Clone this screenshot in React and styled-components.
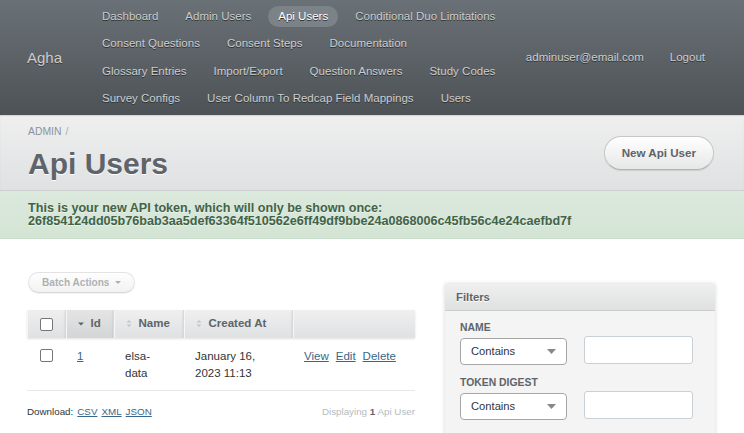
import React from "react";
import styled, { createGlobalStyle } from "styled-components";

const GlobalStyle = createGlobalStyle`
  html, body {
    margin: 0;
    padding: 0;
    background: #ffffff;
  }
  body {
    font-family: "Liberation Sans", Arial, sans-serif;
    font-size: 11.52px;
    line-height: 1.5;
    color: #323537;
  }
`;

const Page = styled.div`
  width: 744px;
  min-height: 433px;
  overflow: hidden;
`;

/* ---------- header ---------- */

const Header = styled.div`
  height: 115px;
  display: flex;
  background: linear-gradient(180deg, #6a7176 0%, #4d5256 100%);
  box-sizing: border-box;
`;

const SiteTitle = styled.h1`
  margin: 0;
  width: 92px;
  flex-shrink: 0;
  padding-left: 27px;
  box-sizing: border-box;
  align-self: center;
  font-size: 15px;
  font-weight: normal;
  color: #cdcdcd;
  text-shadow: 0 1px 0 #3a3e41;
  line-height: 20px;
`;

const Tabs = styled.ul`
  list-style: none;
  margin: 0;
  padding: 3px 0 0;
  width: 420px;
  flex-shrink: 0;
  display: flex;
  flex-wrap: wrap;
  align-content: flex-start;
  column-gap: 7px;
  row-gap: 0;
`;

const Tab = styled.li`
  margin: 3px 0 3.3px;
  height: 21px;
  line-height: 21px;
  padding: 0 10px;
  border-radius: 11px;
  font-size: 11.52px;
  white-space: nowrap;
  color: ${(p) => (p.$current ? "#ffffff" : "#cdcdcd")};
  background: ${(p) => (p.$current ? "#7b8389" : "transparent")};
  text-shadow: 0 1px 0 #2f3336;
`;

const Utility = styled.div`
  margin-left: auto;
  align-self: center;
  display: flex;
  gap: 6px;
  padding-right: 29px;
`;

const UtilLink = styled.span`
  padding: 0 10px;
  font-size: 11.52px;
  line-height: 21px;
  color: #cdcdcd;
  white-space: nowrap;
  text-shadow: 0 1px 0 #2f3336;
`;

/* ---------- title bar ---------- */

const TitleBar = styled.div`
  height: 76px;
  box-sizing: border-box;
  display: flex;
  align-items: center;
  justify-content: space-between;
  padding: 0 30px 0 28px;
  background: linear-gradient(180deg, #efefef 0%, #dfe1e2 100%);
  border-bottom: 1px solid #cdcdcd;
  box-shadow: inset 0 1px 1px rgba(0, 0, 0, 0.12);
`;

const TitleLeft = styled.div`
  align-self: flex-start;
  padding-top: 10px;
`;

const Breadcrumb = styled.div`
  font-size: 10.4px;
  line-height: 14px;
  color: #8a949e;
  text-transform: uppercase;
`;

const Sep = styled.span`
  margin-left: 4px;
  color: #a9b0b6;
`;

const PageTitle = styled.h2`
  margin: 7px 0 0;
  font-size: 30px;
  line-height: 36px;
  font-weight: bold;
  color: #5e6469;
  text-shadow: 0 1px 0 #ffffff;
`;

const RoundButton = styled.span`
  display: inline-flex;
  align-items: center;
  box-sizing: border-box;
  height: ${(p) => p.$h}px;
  padding: 0 ${(p) => p.$px}px;
  border-radius: 200px;
  border: 1px solid #c7c7c7;
  border-bottom-color: #b2b2b2;
  background: linear-gradient(180deg, #ffffff 0%, #e7e7e7 100%);
  box-shadow: 0 1px 1px rgba(0, 0, 0, 0.1), inset 0 1px 0 #ffffff;
  font-weight: bold;
  font-size: ${(p) => p.$fs}px;
  color: #5e6469;
  white-space: nowrap;
  opacity: ${(p) => (p.$disabled ? 0.5 : 1)};
`;

/* ---------- flash ---------- */

const Flash = styled.div`
  padding: 11px 28px 10px;
  background: linear-gradient(180deg, #dce9dd 0%, #d3e4d4 100%);
  border-bottom: 1px solid #c9dcca;
  color: #416347;
  font-weight: bold;
  font-size: 12.6px;
  line-height: 13px;
  text-shadow: 0 1px 0 #eaf2eb;
`;

/* ---------- content ---------- */

const Content = styled.div`
  display: flex;
  gap: 30px;
  padding: 30px 29px 0 27px;
`;

const Main = styled.div`
  flex: 1;
  min-width: 0;
`;

const BatchRow = styled.div`
  padding: 3px 0 0 1px;
`;

const Caret = styled.span`
  display: inline-block;
  margin-left: 5px;
  width: 0;
  height: 0;
  border-left: 3px solid transparent;
  border-right: 3px solid transparent;
  border-top: 3px solid #5e6469;
  vertical-align: middle;
`;

const Table = styled.table`
  width: 100%;
  margin-top: 17px;
  border-collapse: collapse;
  table-layout: fixed;
`;

const Th = styled.th`
  width: ${(p) => (p.$w ? `${p.$w}px` : "auto")};
  height: 28px;
  padding: 0 12px;
  box-sizing: border-box;
  text-align: left;
  font-size: 11.52px;
  font-weight: bold;
  color: #5e6469;
  white-space: nowrap;
  background: ${(p) =>
    p.$sorted
      ? "linear-gradient(180deg, #e4e4e4 0%, #d3d5d6 100%)"
      : "linear-gradient(180deg, #efefef 0%, #dfe1e2 100%)"};
  border-right: 1px solid #d6d8d9;
  box-shadow: inset 1px 0 0 #f6f6f6, 0 1px 2px rgba(0, 0, 0, 0.12);
  &:last-child {
    border-right: none;
  }
`;

const ThInner = styled.span`
  display: inline-flex;
  align-items: center;
  gap: 7px;
`;

const Td = styled.td`
  padding: 10px 12px 8px;
  vertical-align: top;
  font-size: 11.52px;
  line-height: 17px;
  color: #323537;
  border-bottom: 1px solid #e8e8e8;
`;

const CheckCell = styled.span`
  display: block;
  padding-left: 1px;
`;

const Checkbox = styled.span`
  display: block;
  width: 13px;
  height: 13px;
  box-sizing: border-box;
  border: 1px solid #767676;
  border-radius: 2px;
  background: #ffffff;
  margin-top: ${(p) => p.$mt || 0}px;
`;

const Link = styled.a`
  color: #38678b;
  text-decoration: underline;
  margin-right: ${(p) => p.$mr || 0}px;
`;

const IndexFooter = styled.div`
  display: flex;
  justify-content: space-between;
  margin-top: 14px;
  font-size: 9.8px;
  line-height: 14px;
`;

const Download = styled.div`
  color: #323537;
  display: flex;
  gap: 4px;
`;

const Displaying = styled.div`
  color: #b3bcc1;
  b {
    color: #5e6469;
  }
`;

/* ---------- sidebar ---------- */

const Sidebar = styled.div`
  width: 270px;
  flex-shrink: 0;
  margin-top: 15px;
`;

const SidebarSection = styled.div`
  background: #f4f4f4;
  box-shadow: 0 0 4px rgba(0, 0, 0, 0.18);
  min-height: 160px;
`;

const SidebarHeader = styled.h3`
  margin: 0;
  height: 26px;
  line-height: 26px;
  padding-left: 11px;
  font-size: 11.3px;
  font-weight: bold;
  color: #5e6469;
  background: linear-gradient(180deg, #efefef 0%, #dfe1e2 100%);
  border-bottom: 1px solid #cdcdcd;
  text-shadow: 0 1px 0 #ffffff;
`;

const SidebarBody = styled.div`
  padding: 10px 15px 10px;
`;

const FilterGroup = styled.div`
  margin-bottom: 11px;
`;

const FilterLabel = styled.div`
  font-size: 10.4px;
  line-height: 13px;
  font-weight: bold;
  color: #5e6469;
  text-transform: uppercase;
  margin-bottom: 2px;
`;

const FilterRow = styled.div`
  display: flex;
  align-items: flex-start;
  gap: 17px;
`;

const SelectBox = styled.div`
  width: 107px;
  height: 27px;
  margin-top: 2px;
  box-sizing: border-box;
  display: flex;
  align-items: center;
  justify-content: space-between;
  padding: 0 10px;
  border: 1px solid #a6a6a6;
  border-radius: 4px;
  background: #ffffff;
  font-size: 11.2px;
  color: #323537;
`;

const TextInput = styled.div`
  width: 109px;
  height: 28px;
  box-sizing: border-box;
  border: 1px solid #c9d0d6;
  border-radius: 3px;
  background: #ffffff;
`;

const SortIcon = ({ sorted }) =>
  sorted ? (
    <svg width="6" height="8" viewBox="0 0 6 8">
      <path d="M0 2.5 L6 2.5 L3 5.5 Z" fill="#5e6469" />
    </svg>
  ) : (
    <svg width="6" height="9" viewBox="0 0 6 9">
      <path d="M0.5 3.5 L5.5 3.5 L3 1 Z" fill="#c3c6c8" />
      <path d="M0.5 5.5 L5.5 5.5 L3 8 Z" fill="#c3c6c8" />
    </svg>
  );

const tabs = [
  "Dashboard",
  "Admin Users",
  "Api Users",
  "Conditional Duo Limitations",
  "Consent Questions",
  "Consent Steps",
  "Documentation",
  "Glossary Entries",
  "Import/Export",
  "Question Answers",
  "Study Codes",
  "Survey Configs",
  "User Column To Redcap Field Mappings",
  "Users",
];

const filters = ["Name", "Token Digest"];

const App = () => {
  return (
    <Page>
      <GlobalStyle />
      <Header>
        <SiteTitle>Agha</SiteTitle>
        <Tabs>
          {tabs.map((t) => (
            <Tab key={t} $current={t === "Api Users"}>
              {t}
            </Tab>
          ))}
        </Tabs>
        <Utility>
          <UtilLink>adminuser@email.com</UtilLink>
          <UtilLink>Logout</UtilLink>
        </Utility>
      </Header>

      <TitleBar>
        <TitleLeft>
          <Breadcrumb>
            Admin<Sep>/</Sep>
          </Breadcrumb>
          <PageTitle>Api Users</PageTitle>
        </TitleLeft>
        <RoundButton $h={34} $px={17} $fs={11.6}>
          New Api User
        </RoundButton>
      </TitleBar>

      <Flash>
        This is your new API token, which will only be shown once:
        <br />
        26f854124dd05b76bab3aa5def63364f510562e6ff49df9bbe24a0868006c45fb56c4e24caefbd7f
      </Flash>

      <Content>
        <Main>
          <BatchRow>
            <RoundButton $h={21} $px={13} $fs={10.1} $disabled>
              Batch Actions
              <Caret />
            </RoundButton>
          </BatchRow>

          <Table>
            <thead>
              <tr>
                <Th $w={38}>
                  <CheckCell>
                    <Checkbox />
                  </CheckCell>
                </Th>
                <Th $w={48} $sorted>
                  <ThInner>
                    <SortIcon sorted />
                    Id
                  </ThInner>
                </Th>
                <Th $w={70}>
                  <ThInner>
                    <SortIcon />
                    Name
                  </ThInner>
                </Th>
                <Th $w={109}>
                  <ThInner>
                    <SortIcon />
                    Created At
                  </ThInner>
                </Th>
                <Th />
              </tr>
            </thead>
            <tbody>
              <tr>
                <Td>
                  <CheckCell>
                    <Checkbox $mt={1} />
                  </CheckCell>
                </Td>
                <Td>
                  <Link>1</Link>
                </Td>
                <Td>elsa-data</Td>
                <Td>January 16, 2023 11:13</Td>
                <Td>
                  <Link $mr={7}>View</Link>
                  <Link $mr={7}>Edit</Link>
                  <Link>Delete</Link>
                </Td>
              </tr>
            </tbody>
          </Table>

          <IndexFooter>
            <Download>
              Download:
              <Link>CSV</Link>
              <Link>XML</Link>
              <Link>JSON</Link>
            </Download>
            <Displaying>
              Displaying <b>1</b> Api User
            </Displaying>
          </IndexFooter>
        </Main>

        <Sidebar>
          <SidebarSection>
            <SidebarHeader>Filters</SidebarHeader>
            <SidebarBody>
              {filters.map((f) => (
                <FilterGroup key={f}>
                  <FilterLabel>{f}</FilterLabel>
                  <FilterRow>
                    <SelectBox>
                      Contains
                      <svg width="9" height="5" viewBox="0 0 9 5">
                        <path d="M0 0 L9 0 L4.5 5 Z" fill="#888888" />
                      </svg>
                    </SelectBox>
                    <TextInput />
                  </FilterRow>
                </FilterGroup>
              ))}
            </SidebarBody>
          </SidebarSection>
        </Sidebar>
      </Content>
    </Page>
  );
};

export default App;
